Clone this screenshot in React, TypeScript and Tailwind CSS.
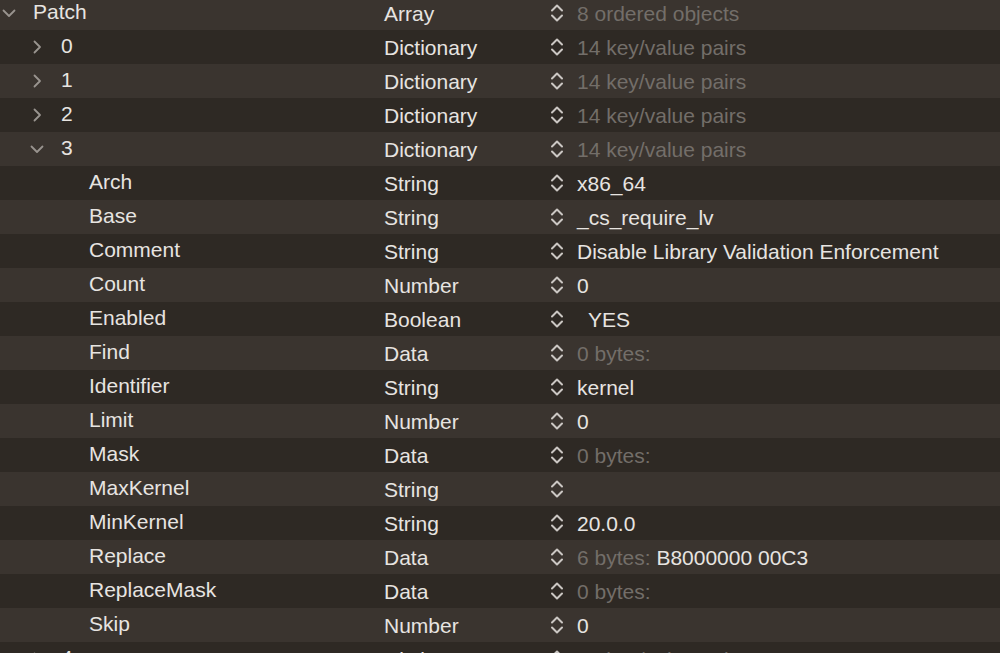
import React from 'react';

type Row = {
  key: string;
  type: string;
  depth: number;
  chevron?: 'open' | 'closed';
  value?: string;
  dim?: string;
  indent?: boolean;
};

const rows: Row[] = [
  { key: 'Patch', type: 'Array', depth: 0, chevron: 'open', dim: '8 ordered objects' },
  { key: '0', type: 'Dictionary', depth: 1, chevron: 'closed', dim: '14 key/value pairs' },
  { key: '1', type: 'Dictionary', depth: 1, chevron: 'closed', dim: '14 key/value pairs' },
  { key: '2', type: 'Dictionary', depth: 1, chevron: 'closed', dim: '14 key/value pairs' },
  { key: '3', type: 'Dictionary', depth: 1, chevron: 'open', dim: '14 key/value pairs' },
  { key: 'Arch', type: 'String', depth: 2, value: 'x86_64' },
  { key: 'Base', type: 'String', depth: 2, value: '_cs_require_lv' },
  { key: 'Comment', type: 'String', depth: 2, value: 'Disable Library Validation Enforcement' },
  { key: 'Count', type: 'Number', depth: 2, value: '0' },
  { key: 'Enabled', type: 'Boolean', depth: 2, value: 'YES', indent: true },
  { key: 'Find', type: 'Data', depth: 2, dim: '0 bytes:' },
  { key: 'Identifier', type: 'String', depth: 2, value: 'kernel' },
  { key: 'Limit', type: 'Number', depth: 2, value: '0' },
  { key: 'Mask', type: 'Data', depth: 2, dim: '0 bytes:' },
  { key: 'MaxKernel', type: 'String', depth: 2, value: '' },
  { key: 'MinKernel', type: 'String', depth: 2, value: '20.0.0' },
  { key: 'Replace', type: 'Data', depth: 2, dim: '6 bytes:', value: 'B8000000 00C3' },
  { key: 'ReplaceMask', type: 'Data', depth: 2, dim: '0 bytes:' },
  { key: 'Skip', type: 'Number', depth: 2, value: '0' },
  { key: '4', type: 'Dictionary', depth: 1, chevron: 'closed', dim: '14 key/value pairs' },
];

const indentClass = ['pl-0', 'pl-[28px]', 'pl-[56px]'];

function Chevron({ open }: { open: boolean }) {
  return (
    <svg width="16" height="16" viewBox="0 0 16 16" fill="none" stroke="#99948f" strokeWidth="1.8" strokeLinecap="round" strokeLinejoin="round">
      {open ? <path d="M2.5 5.5 L8 11 L13.5 5.5" /> : <path d="M5.5 2.5 L11 8 L5.5 13.5" />}
    </svg>
  );
}

function Stepper() {
  return (
    <svg width="14" height="20" viewBox="0 0 14 20" fill="none" stroke="#cbc7c3" strokeWidth="2" strokeLinecap="round" strokeLinejoin="round">
      <path d="M2 7.5 L7 2.5 L12 7.5" />
      <path d="M2 12.5 L7 17.5 L12 12.5" />
    </svg>
  );
}

export default function App() {
  return (
    <div
      className="h-[653px] w-[1000px] overflow-hidden bg-[#2e2924] text-[21px] text-[#e7e4e1]"
      style={{ fontFamily: '"Liberation Sans", Arial, sans-serif' }}
    >
      <div className="-mt-[4px]">
        {rows.map((row, i) => (
          <div
            key={row.key + i}
            className={`flex h-[34px] items-center ${i % 2 === 0 ? 'bg-[#3a342f]' : 'bg-[#2e2924]'}`}
          >
            <div className={`flex w-[384px] items-center ${indentClass[row.depth]}`}>
              <div className="flex w-[33px] items-center pl-[1px]">
                {row.chevron && <Chevron open={row.chevron === 'open'} />}
              </div>
              <span className="-mt-[3px] leading-none">{row.key}</span>
            </div>
            <div className="w-[166px] leading-none">{row.type}</div>
            <div className="flex items-center">
              <Stepper />
              <span className={`ml-[13px] leading-none ${row.indent ? 'pl-[11px]' : ''}`}>
                {row.dim && <span className="text-[#736e69]">{row.dim}</span>}
                {row.dim && row.value ? ' ' : ''}
                {row.value}
              </span>
            </div>
          </div>
        ))}
      </div>
    </div>
  );
}
